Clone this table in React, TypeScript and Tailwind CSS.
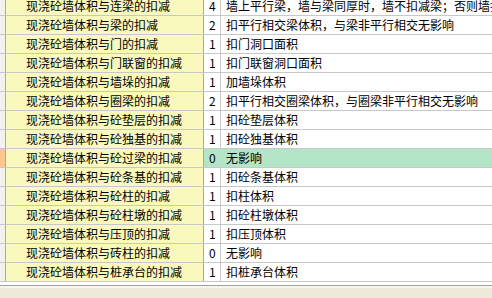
import React from "react";

const rows: [string, string, string][] = [
  ["现浇砼墙体积与连梁的扣减", "4", "墙上平行梁，墙与梁同厚时，墙不扣减梁；否则墙扣减梁"],
  ["现浇砼墙体积与梁的扣减", "2", "扣平行相交梁体积，与梁非平行相交无影响"],
  ["现浇砼墙体积与门的扣减", "1", "扣门洞口面积"],
  ["现浇砼墙体积与门联窗的扣减", "1", "扣门联窗洞口面积"],
  ["现浇砼墙体积与墙垛的扣减", "1", "加墙垛体积"],
  ["现浇砼墙体积与圈梁的扣减", "2", "扣平行相交圈梁体积，与圈梁非平行相交无影响"],
  ["现浇砼墙体积与砼垫层的扣减", "1", "扣砼垫层体积"],
  ["现浇砼墙体积与砼独基的扣减", "1", "扣砼独基体积"],
  ["现浇砼墙体积与砼过梁的扣减", "0", "无影响"],
  ["现浇砼墙体积与砼条基的扣减", "1", "扣砼条基体积"],
  ["现浇砼墙体积与砼柱的扣减", "1", "扣柱体积"],
  ["现浇砼墙体积与砼柱墩的扣减", "1", "扣砼柱墩体积"],
  ["现浇砼墙体积与压顶的扣减", "1", "扣压顶体积"],
  ["现浇砼墙体积与砖柱的扣减", "0", "无影响"],
  ["现浇砼墙体积与桩承台的扣减", "1", "扣桩承台体积"],
];

export default function App() {
  return (
    <div
      className="w-[492px] h-[298px] overflow-hidden bg-white flex flex-col text-[12px] text-black"
      style={{ fontFamily: '"Noto Sans CJK SC", "Noto Sans", sans-serif' }}
    >
      <div className="flex-none overflow-hidden h-[285px]">
        <div className="mt-[-3px]">
          {rows.map(([a, n, d], i) => {
            const sel = i === 8;
            return (
              <div key={i} className="flex h-[19px] box-border border-b border-[#c8c8c8]">
                <div
                  className={`w-[6px] flex-none border-r border-[#a8a8a8] ${
                    sel ? "bg-[#fcc68c]" : "bg-[#f2f2f0]"
                  }`}
                />
                <div className="w-[198px] flex-none bg-[#f9f9bd] border-r border-[#a8a8a8] pl-[20px] flex items-center whitespace-nowrap overflow-hidden leading-none">
                  {a}
                </div>
                <div
                  className={`w-[17px] flex-none border-r ${
                    sel ? "bg-[#b4e5c6] border-[#b4e5c6]" : "border-[#c8c8c8]"
                  } pl-[5px] flex items-center leading-none`}
                >
                  {n}
                </div>
                <div
                  className={`flex-1 pl-[5px] flex items-center whitespace-nowrap overflow-hidden leading-none ${
                    sel ? "bg-[#b4e5c6]" : ""
                  }`}
                >
                  {d}
                </div>
              </div>
            );
          })}
        </div>
      </div>
      <div className="h-[1px] bg-[#a0a0a0]" />
      <div className="h-[2px] bg-[#f6f5f0]" />
      <div className="flex-1 bg-[#ece9d8]" />
    </div>
  );
}
